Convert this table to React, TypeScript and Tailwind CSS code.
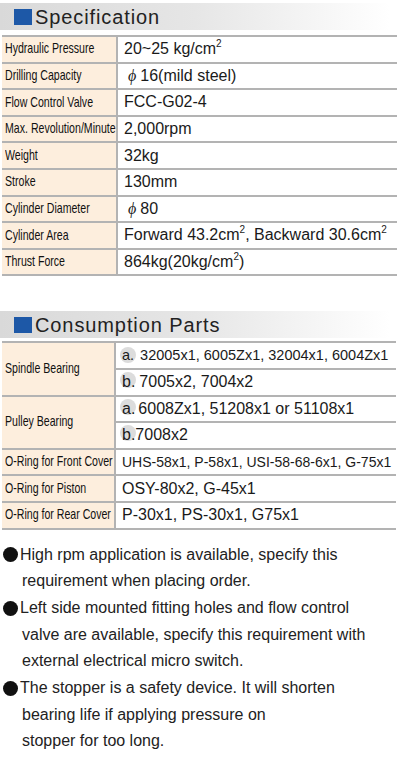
import React from "react";

const SUP = () => <sup className="text-[10px] align-[5px]">2</sup>;

const SPEC: [string, React.ReactNode][] = [
  ["Hydraulic Pressure", <>20~25 kg/cm<SUP /></>],
  ["Drilling Capacity", <><span className="italic mx-1 font-['Liberation_Serif',serif]">ϕ</span>16(mild steel)</>],
  ["Flow Control Valve", "FCC-G02-4"],
  ["Max. Revolution/Minute", "2,000rpm"],
  ["Weight", "32kg"],
  ["Stroke", "130mm"],
  ["Cylinder Diameter", <><span className="italic mx-1 font-['Liberation_Serif',serif]">ϕ</span>80</>],
  ["Cylinder Area", <>Forward 43.2cm<SUP />, Backward 30.6cm<SUP /></>],
  ["Thrust Force", <>864kg(20kg/cm<SUP />)</>],
];

const NOTES = [
  ["High rpm application is available, specify this", "requirement when placing order."],
  [
    "Left side mounted fitting holes and flow control",
    "valve are available, specify this requirement with",
    "external electrical micro switch.",
  ],
  ["The stopper is a safety device. It will shorten", "bearing life if applying pressure on", "stopper for too long."],
];

const sans = "font-['Liberation_Sans',Arial,sans-serif]";

function Header({ title }: { title: string }) {
  return (
    <div className="h-[27px] flex items-center bg-gradient-to-r from-[#d9d9d9] via-[#e6e6e6] to-white pl-[14px]">
      <span className="w-[18px] h-[16px] bg-[#1d58a7] mr-[3px]" />
      <span className="text-[20px] tracking-[0.9px] text-[#222] leading-none">{title}</span>
    </div>
  );
}

function Label({ text, w }: { text: string; w: string }) {
  return (
    <div className={`${w} shrink-0 bg-[#fdeedd] border-r-2 border-[#b3b3b3] flex items-center pl-[3px] overflow-hidden`}>
      <span className="inline-block whitespace-nowrap text-[14.5px] text-[#111] origin-left scale-x-[0.73]">{text}</span>
    </div>
  );
}

function Badge({ l }: { l: string }) {
  return (
    <span className="relative inline-block">
      <span className="absolute left-[-2px] top-[2px] w-[16px] h-[16px] rounded-full bg-[#dcdcdc]" />
      <span className="relative">{l}.</span>
    </span>
  );
}

export default function App() {
  return (
    <div className={`w-[400px] h-[760px] bg-white text-[#1a1a1a] ${sans} overflow-hidden`}>
      <div className="pt-[3px] pr-[10px]">
        <Header title="Specification" />
      </div>

      {/* spec table */}
      <div className="mt-[5px] mx-[2px] border-t-2 border-[#b3b3b3] w-[395px]">
        {SPEC.map(([k, v]) => (
          <div key={k} className="flex h-[26.6px] border-b-2 border-[#b3b3b3]">
            <Label text={k} w="w-[116px]" />
            <div className="flex-1 flex items-center pl-[6px] text-[16px] whitespace-nowrap">{v}</div>
          </div>
        ))}
      </div>

      <div className="mt-[35px] pr-[10px]">
        <Header title="Consumption Parts" />
      </div>

      {/* consumption table */}
      <div className="mt-[3px] mx-[2px] border-t-2 border-[#b3b3b3] w-[394px]">
        <div className="flex border-b-2 border-[#b3b3b3]">
          <Label text="Spindle Bearing" w="w-[114px]" />
          <div className="flex-1 whitespace-nowrap">
            <div className="h-[26.5px] flex items-center pl-[6px] text-[14.5px] border-b-2 border-[#b3b3b3]">
              <Badge l="a" />
              <span className="ml-[6px]">32005x1, 6005Zx1, 32004x1, 6004Zx1</span>
            </div>
            <div className="h-[24.7px] flex items-center pl-[6px] text-[16px]">
              <Badge l="b" />
              <span className="ml-[4px]">7005x2, 7004x2</span>
            </div>
          </div>
        </div>
        <div className="flex border-b-2 border-[#b3b3b3]">
          <Label text="Pulley Bearing" w="w-[114px]" />
          <div className="flex-1 whitespace-nowrap">
            <div className="h-[26.5px] flex items-center pl-[6px] text-[16px] border-b-2 border-[#b3b3b3]">
              <Badge l="a" />
              <span className="ml-[3px]">6008Zx1, 51208x1 or 51108x1</span>
            </div>
            <div className="h-[24.7px] flex items-center pl-[6px] text-[16px]">
              <Badge l="b" />
              <span>7008x2</span>
            </div>
          </div>
        </div>
        {[
          ["O-Ring for Front Cover", "UHS-58x1, P-58x1, USI-58-68-6x1, G-75x1", "text-[14px]"],
          ["O-Ring for Piston", "OSY-80x2, G-45x1", "text-[16px]"],
          ["O-Ring for Rear Cover", "P-30x1, PS-30x1, G75x1", "text-[16px]"],
        ].map(([k, v, s]) => (
          <div key={k} className="flex h-[26.6px] border-b-2 border-[#b3b3b3]">
            <Label text={k} w="w-[114px]" />
            <div className={`flex-1 flex items-center pl-[6px] ${s} whitespace-nowrap`}>{v}</div>
          </div>
        ))}
      </div>

      {/* notes */}
      <div className="mt-[12px] pl-[3px] text-[16px] leading-[26.7px] text-[#222]">
        {NOTES.map((n, i) => (
          <div key={i}>
            {n.map((t, j) => (
              <div key={j} className="flex items-center whitespace-nowrap">
                {j === 0 ? (
                  <span className="w-[15px] h-[15px] rounded-full bg-[#111] mr-[2px] shrink-0" />
                ) : (
                  <span className="w-[19px] shrink-0" />
                )}
                {t}
              </div>
            ))}
          </div>
        ))}
      </div>
    </div>
  );
}
